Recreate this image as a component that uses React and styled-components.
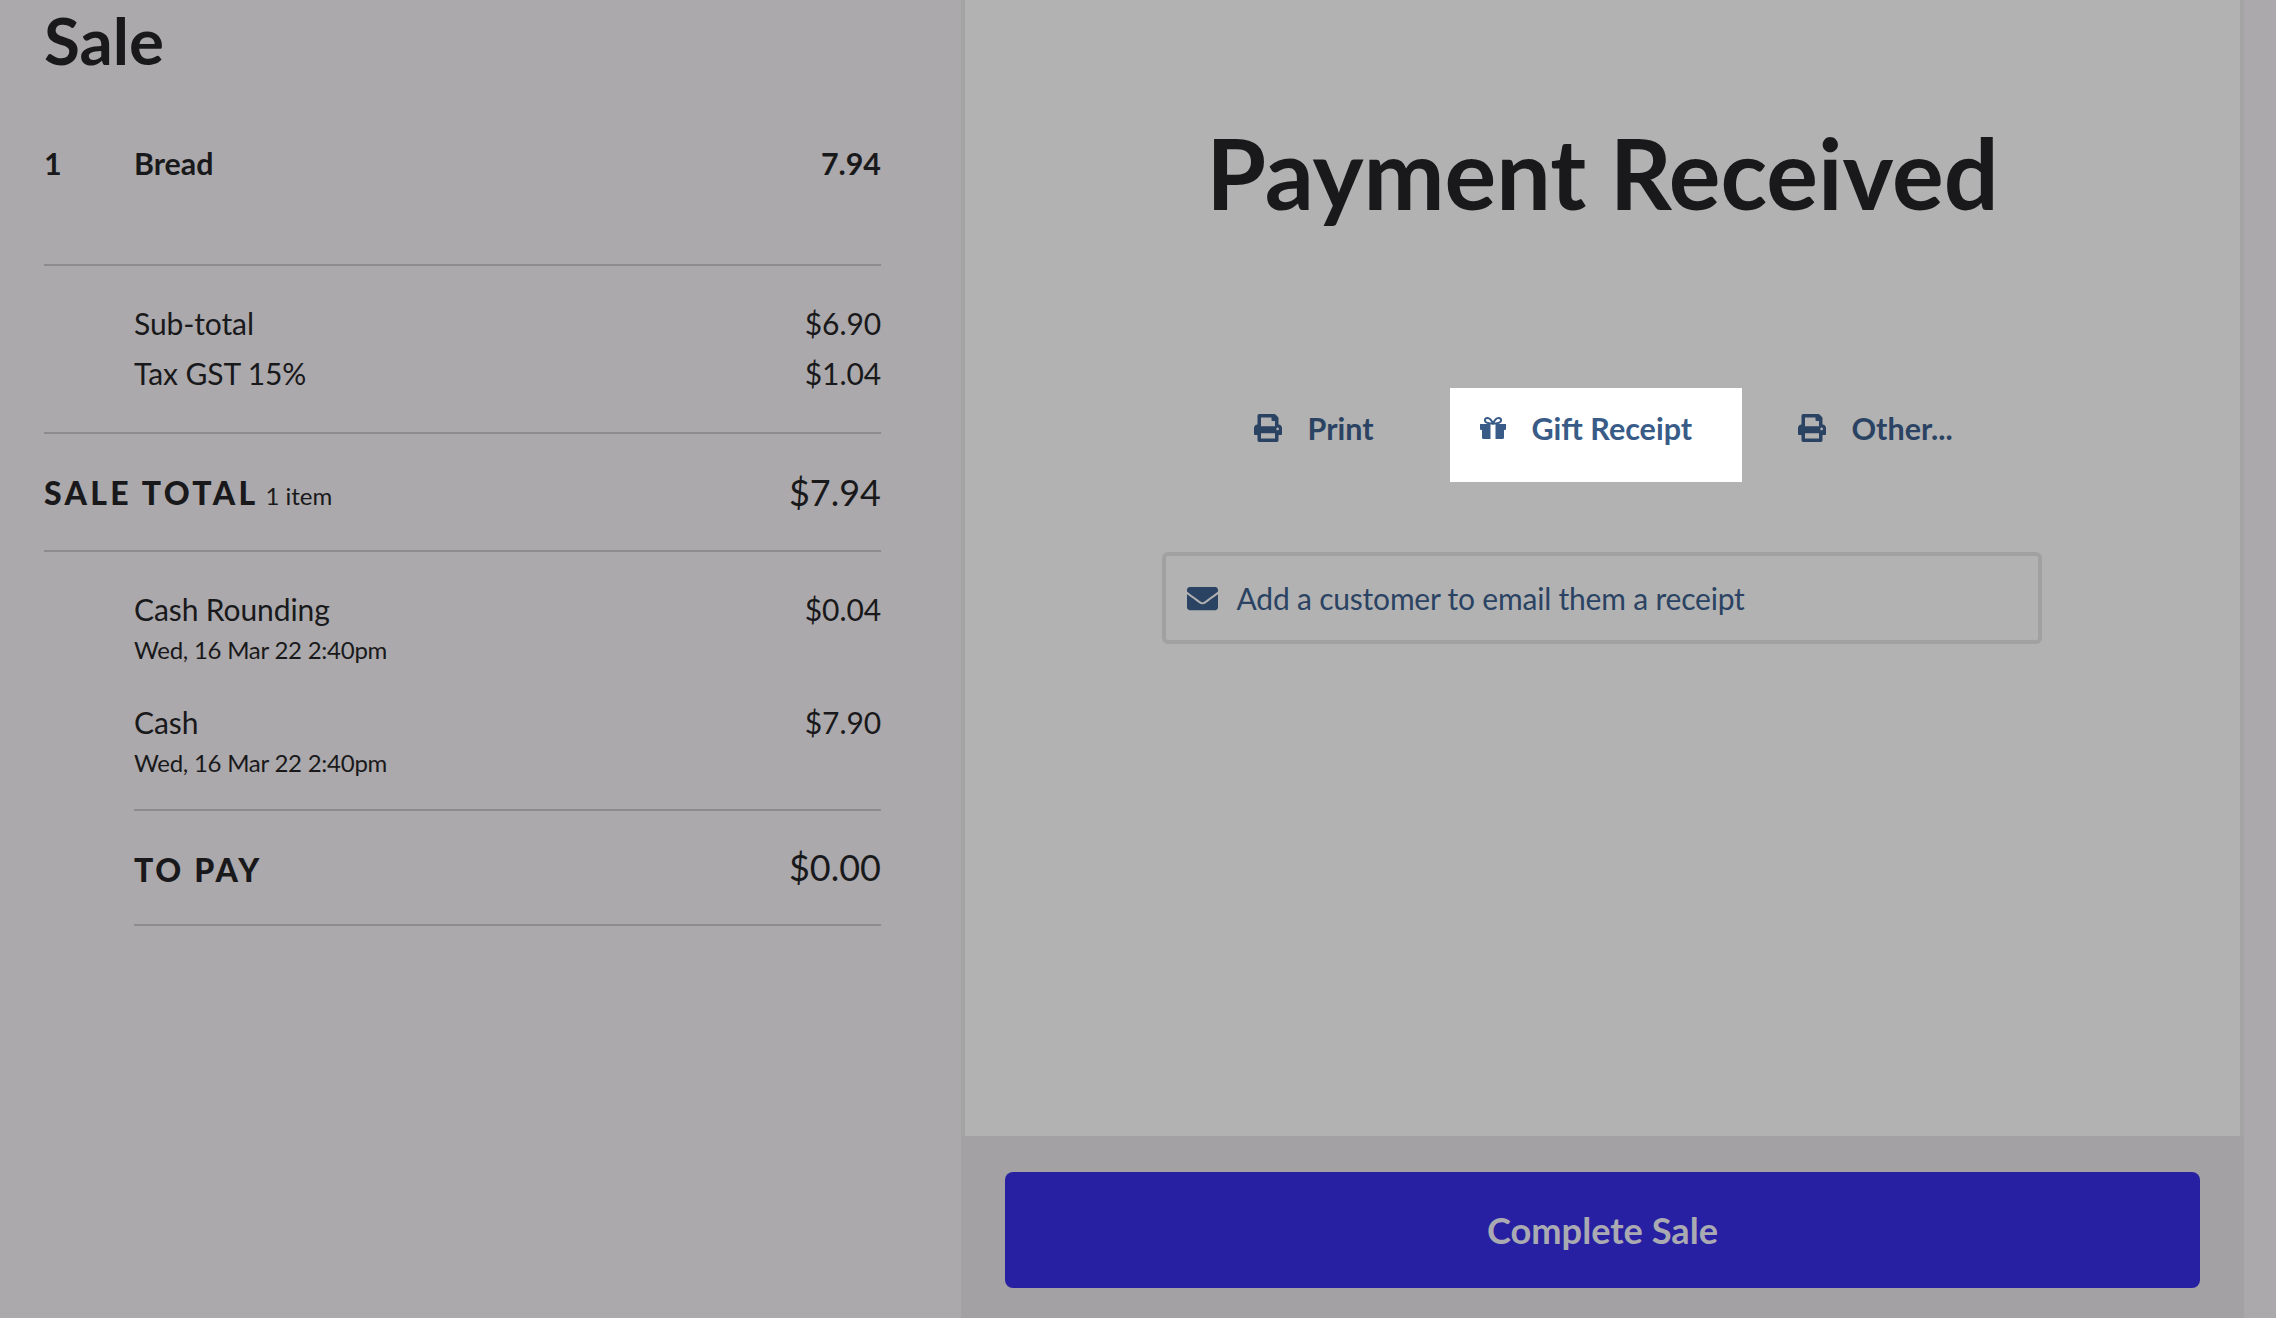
import styled, { createGlobalStyle } from 'styled-components'
import { FaPrint, FaEnvelope } from 'react-icons/fa'

const GlobalStyle = createGlobalStyle`
  html, body {
    margin: 0;
    height: 100%;
    background: #aba9ac;
    font-family: Lato, "Liberation Sans", sans-serif;
  }
  #root { height: 100%; }
`

const Page = styled.div`
  display: flex;
  height: 1318px;
  overflow: hidden;
  background: #aba9ac;
  color: #19191b;
`

const SalePanel = styled.section`
  width: 961px;
  flex-shrink: 0;
  box-sizing: border-box;
  padding: 0 80px 0 44px;
`

const Title = styled.h1`
  margin: 0;
  font-size: 65.5px;
  font-weight: 700;
  line-height: 79px;
`

const Row = styled.div`
  display: flex;
  justify-content: space-between;
  align-items: center;
  height: 50px;
  font-size: 30px;
  letter-spacing: -0.1px;
  line-height: 50px;
`

const ItemRow = styled(Row)`
  height: 40px;
  line-height: 40px;
  margin: 64px 0 81px;
  font-size: 30.4px;
  font-weight: 700;
  letter-spacing: 0;
`

const ItemName = styled.span`
  display: flex;
  gap: 72px;
`

const Qty = styled.span`
  width: 18px;
`

const Divider = styled.hr`
  margin: 0 0 0 ${(p) => (p.$inset ? 90 : 0)}px;
  border: 0;
  height: 2px;
  background: #8c8b8e;
`

const Indented = styled.div`
  padding: ${(p) => p.$pad};
`

const TotalRow = styled(Row)`
  height: ${(p) => p.$height}px;
  font-size: 36px;
  letter-spacing: 0;
  padding-top: 5px;
  box-sizing: border-box;
`

const TotalLabel = styled.span`
  font-size: 32px;
  font-weight: 900;
  letter-spacing: ${(p) => p.$spacing}px;
`

const TotalAmount = styled.span`
  margin-bottom: 6px;
`

const ItemCount = styled.span`
  font-size: 24px;
  font-weight: 400;
  letter-spacing: 0;
  margin-left: 7px;
`

const Payment = styled.div`
  margin-bottom: 32px;
  &:last-child { margin-bottom: 0; }
`

const PaymentDate = styled.div`
  margin-top: 1px;
  font-size: 24px;
  letter-spacing: -0.25px;
  line-height: 30px;
`

const Main = styled.main`
  width: 1283px;
  flex-shrink: 0;
  display: flex;
  flex-direction: column;
`

const Content = styled.div`
  flex: 1;
  display: flex;
  flex-direction: column;
  align-items: center;
  background: #b2b2b2;
  border-left: 4px solid #a5a4a5;
  border-right: 4px solid #a5a4a5;
`

const Heading = styled.h2`
  margin: 109px 0 0;
  font-size: 96.8px;
  font-weight: 700;
  line-height: 128px;
`

const Tabs = styled.div`
  display: flex;
  margin-top: 151px;
`

const Tab = styled.div`
  display: flex;
  align-items: center;
  gap: 26px;
  width: ${(p) => p.$width}px;
  height: 94px;
  box-sizing: border-box;
  padding: 20px 0 34px ${(p) => p.$left}px;
  font-size: 30.5px;
  font-weight: 700;
  line-height: 40px;
  color: ${(p) => (p.$active ? '#395b87' : '#2b4363')};
  background: ${(p) => (p.$active ? '#fff' : 'transparent')};

  svg {
    width: ${(p) => p.$icon}px;
    height: ${(p) => (p.$active ? 23 : p.$icon)}px;
    flex-shrink: 0;
  }
`

const CustomerField = styled.div`
  display: flex;
  align-items: center;
  gap: 19px;
  width: 880px;
  height: 92px;
  box-sizing: border-box;
  margin: 70px 2px 0 0;
  padding: 0 21px;
  border: 4px solid #a2a1a2;
  border-radius: 6px;
  font-size: 30px;
  letter-spacing: -0.2px;
  color: #2b4363;

  svg {
    width: 31px;
    height: 31px;
    flex-shrink: 0;
  }
`

const Footer = styled.footer`
  height: 182px;
  box-sizing: border-box;
  padding: 36px 44px 30px;
  background: #a3a1a3;
`

const CompleteButton = styled.button`
  display: block;
  width: 100%;
  height: 116px;
  border: 0;
  border-radius: 8px;
  background: #2720a2;
  color: #aaaab2;
  font-family: inherit;
  font-size: 36.2px;
  font-weight: 700;
`

// the package's gift has a wide lid, this one follows the upright box in the picture
const GiftIcon = () => (
  <svg viewBox="0 0 26 23" aria-hidden="true">
    <path
      fill="currentColor"
      d="M0 7h10.5v15H3.5Q2 22 2 20.5V13H1Q0 13 0 12zM26 7H15.5v15h7q1.5 0 1.5-1.5V13h1q1 0 1-1z"
    />
    <g fill="none" stroke="currentColor" strokeWidth="2">
      <path d="M13 6.5C11 2 9 1 7.5 1 5.5 1 4.5 2.5 5 4c.5 1.5 3 2.5 8 2.5z" />
      <path d="M13 6.5C15 2 17 1 18.5 1c2 0 3 1.5 2.5 3-.5 1.5-3 2.5-8 2.5z" />
    </g>
  </svg>
)

export default function App() {
  return (
    <Page>
      <GlobalStyle />
      <SalePanel>
        <Title>Sale</Title>
        <ItemRow>
          <ItemName>
            <Qty>1</Qty>
            <span>Bread</span>
          </ItemName>
          <span>7.94</span>
        </ItemRow>
        <Divider />
        <Indented $pad="32px 0 34px 90px">
          <Row><span>Sub-total</span><span>$6.90</span></Row>
          <Row><span>Tax GST 15%</span><span>$1.04</span></Row>
        </Indented>
        <Divider />
        <TotalRow $height={116}>
          <TotalLabel $spacing={3.3}>SALE TOTAL<ItemCount>1 item</ItemCount></TotalLabel>
          <TotalAmount>$7.94</TotalAmount>
        </TotalRow>
        <Divider />
        <Indented $pad="32px 0 31px 90px">
          <Payment>
            <Row><span>Cash Rounding</span><span>$0.04</span></Row>
            <PaymentDate>Wed, 16 Mar 22 2:40pm</PaymentDate>
          </Payment>
          <Payment>
            <Row><span>Cash</span><span>$7.90</span></Row>
            <PaymentDate>Wed, 16 Mar 22 2:40pm</PaymentDate>
          </Payment>
        </Indented>
        <Divider $inset />
        <Indented $pad="0 0 0 90px">
          <TotalRow $height={113}>
            <TotalLabel $spacing={2.7}>TO PAY</TotalLabel>
            <TotalAmount>$0.00</TotalAmount>
          </TotalRow>
        </Indented>
        <Divider $inset />
      </SalePanel>
      <Main>
        <Content>
          <Heading>Payment Received</Heading>
          <Tabs>
            <Tab $width={196} $left={0} $icon={28}><FaPrint />Print</Tab>
            <Tab $active $width={292} $left={30} $icon={26}><GiftIcon />Gift Receipt</Tab>
            <Tab $width={210} $left={56} $icon={28}><FaPrint />Other...</Tab>
          </Tabs>
          <CustomerField>
            <FaEnvelope />
            Add a customer to email them a receipt
          </CustomerField>
        </Content>
        <Footer>
          <CompleteButton>Complete Sale</CompleteButton>
        </Footer>
      </Main>
    </Page>
  )
}
